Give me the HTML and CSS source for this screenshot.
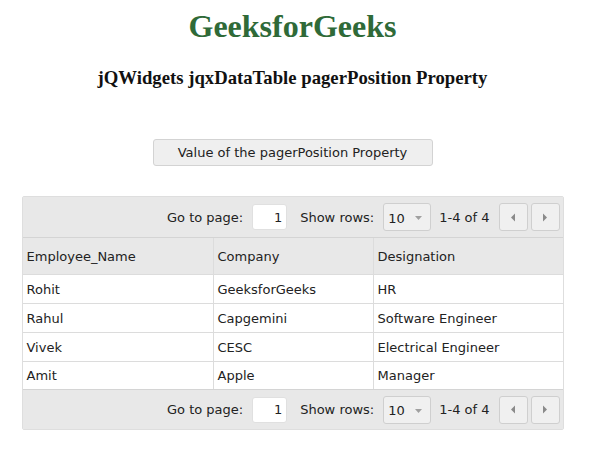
FILE: index.html
```html
<!DOCTYPE html>
<html>
<head>
<meta charset="utf-8">
<link rel="stylesheet" href="styles.css">
</head>
<body>
<h1 class="title">GeeksforGeeks</h1>
<h3 class="subtitle">jQWidgets jqxDataTable pagerPosition Property</h3>
<div class="btn-wrap"><button class="btn">Value of the pagerPosition Property</button></div>
<div class="grid">
  <div class="pager pager-top">
    <span class="lbl">Go to page:</span>
    <span class="page-input">1</span>
    <span class="lbl show">Show rows:</span>
    <span class="dropdown"><span>10</span><svg width="9" height="6" viewBox="0 0 9 6"><path d="M1 1h7L4.5 5z" fill="#a0a0a0"/></svg></span>
    <span class="lbl range">1-4 of 4</span>
    <span class="nav"><svg width="6" height="9" viewBox="0 0 6 9"><path d="M5 0.5v8L1 4.5z" fill="#8a8a8a"/></svg></span>
    <span class="nav"><svg width="6" height="9" viewBox="0 0 6 9"><path d="M1 0.5v8L5 4.5z" fill="#8a8a8a"/></svg></span>
  </div>
  <div class="rows">
    <div class="cell head">Employee_Name</div><div class="cell head sep">Company</div><div class="cell head sep">Designation</div>
    <div class="cell">Rohit</div><div class="cell sep">GeeksforGeeks</div><div class="cell sep">HR</div>
    <div class="cell">Rahul</div><div class="cell sep">Capgemini</div><div class="cell sep">Software Engineer</div>
    <div class="cell">Vivek</div><div class="cell sep">CESC</div><div class="cell sep">Electrical Engineer</div>
    <div class="cell last">Amit</div><div class="cell sep last">Apple</div><div class="cell sep last">Manager</div>
  </div>
  <div class="pager pager-bottom">
    <span class="lbl">Go to page:</span>
    <span class="page-input">1</span>
    <span class="lbl show">Show rows:</span>
    <span class="dropdown"><span>10</span><svg width="9" height="6" viewBox="0 0 9 6"><path d="M1 1h7L4.5 5z" fill="#a0a0a0"/></svg></span>
    <span class="lbl range">1-4 of 4</span>
    <span class="nav"><svg width="6" height="9" viewBox="0 0 6 9"><path d="M5 0.5v8L1 4.5z" fill="#8a8a8a"/></svg></span>
    <span class="nav"><svg width="6" height="9" viewBox="0 0 6 9"><path d="M1 0.5v8L5 4.5z" fill="#8a8a8a"/></svg></span>
  </div>
</div>
</body>
</html>
```

FILE: styles.css
```css
html, body { background: #ffffff; }
body {
  margin: 8px 14px 8px 8px;
  font-family: "Liberation Serif", "Times New Roman", serif;
}
.title {
  margin: 0;
  text-align: center;
  font-size: 32px;
  line-height: 37px;
  color: #2f6a38;
  font-weight: bold;
}
.subtitle {
  margin: 22px 0 0;
  text-align: center;
  font-size: 18.72px;
  line-height: 22px;
  font-weight: bold;
  color: #111;
}
.btn-wrap {
  display: flex;
  justify-content: center;
  margin-top: 50px;
}
.btn {
  width: 280px;
  height: 27px;
  background: #efefef;
  border: 1px solid #d3d3d3;
  border-radius: 3px;
  font-family: "DejaVu Sans", Verdana, sans-serif;
  font-size: 13px;
  color: #222;
  padding: 0;
}
.grid {
  width: 540px;
  margin: 30px auto 0;
  border: 1px solid #dedede;
  border-radius: 2px;
  font-family: "DejaVu Sans", Verdana, sans-serif;
  font-size: 13px;
  color: #222;
}
.pager {
  height: 40px;
  background: #e8e8e8;
  display: flex;
  align-items: center;
  justify-content: flex-end;
  padding-right: 3px;
}
.pager-top { border-bottom: 1px solid #d4d4d4; }
.pager-bottom { border-top: 1px solid #d4d4d4; height: 39px; }
.lbl { white-space: nowrap; }
.page-input {
  width: 35px;
  height: 26px;
  box-sizing: border-box;
  background: #fff;
  border: 1px solid #e0e0e0;
  border-radius: 3px;
  margin-left: 9px;
  display: flex;
  align-items: center;
  justify-content: flex-end;
  padding-right: 4px;
}
.show { margin-left: 13px; }
.dropdown {
  width: 48px;
  height: 28px;
  box-sizing: border-box;
  margin-left: 9px;
  background: #f0f0f0;
  border: 1px solid #cfcfcf;
  border-radius: 3px;
  display: flex;
  align-items: center;
  justify-content: space-between;
  padding: 2px 7px 0 4px;
}
.range { margin-left: 8px; margin-right: 6px; }
.nav {
  width: 29px;
  height: 28px;
  box-sizing: border-box;
  background: #f0f0f0;
  border: 1px solid #cfcfcf;
  border-radius: 3px;
  display: flex;
  align-items: center;
  justify-content: center;
  margin-left: 3px;
}
.nav:first-of-type { margin-left: 0; }
.rows {
  display: grid;
  grid-template-columns: 190px 160px 190px;
}
.cell {
  height: 28px;
  border-bottom: 1px solid #dcdcdc;
  display: flex;
  align-items: center;
  padding-left: 4px;
  white-space: nowrap;
  background: #fff;
}
.cell.sep { border-left: 1px solid #dcdcdc; padding-left: 4px; }
.cell.head {
  height: 36px;
  background: #e8e8e8;
}
.cell.last { border-bottom: none; height: 27px; }
```
